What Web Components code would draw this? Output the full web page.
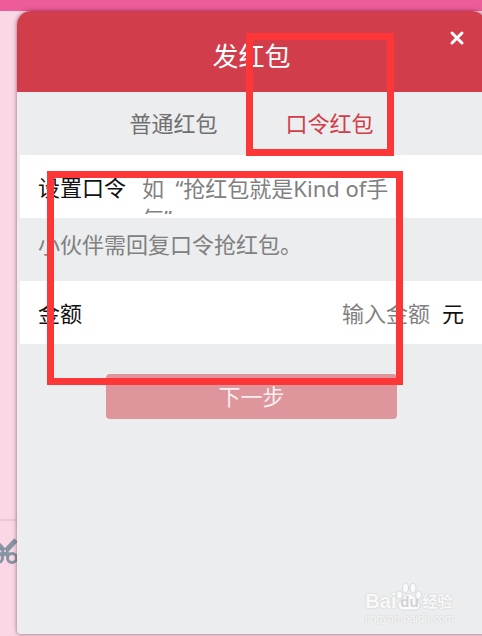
<!DOCTYPE html>
<html lang="zh-CN">
<head>
<meta charset="utf-8">
<title>发红包</title>
<style>
  body {
    margin: 0;
    overflow: hidden;
    font-family: "Noto Sans", "Noto Sans CJK SC", sans-serif;
    font-size: 22px;
    line-height: 30px;
    color: #111;
  }
</style>
</head>
<body>
<chat-window>
  <packet-dialog>
    <span slot="title">发红包</span>
    <packet-tabs slot="tabs"></packet-tabs>
    <packet-field label="设置口令" hint="如  “抢红包就是Kind of手气”" multiline></packet-field>
    <packet-note>小伙伴需回复口令抢红包。</packet-note>
    <packet-field label="金额" hint="输入金额" unit="元"></packet-field>
    <next-button>下一步</next-button>
    <site-mark slot="mark"></site-mark>
  </packet-dialog>
  <marker-frame class="tab" slot="marks"></marker-frame>
  <marker-frame class="form" slot="marks"></marker-frame>
</chat-window>

<script>
const make = (html) => {
  const template = document.createElement("template");
  template.innerHTML = html;
  return template;
};

class BaseElement extends HTMLElement {
  constructor() {
    super();
    const shadow = this.attachShadow({ mode: "open" });
    shadow.append(this.constructor.template.content.cloneNode(true));
  }
}

// the chat behind the dialog: top bar, and a strip of its toolbar
class ChatWindow extends BaseElement {
  static template = make(`
    <style>
      :host {
        display: flex;
        flex-direction: column;
        position: relative;
        height: 100vh;
        background: #fad7e5;
      }
      .bar { flex: none; height: 11px; background: #ed5b99; }
      .main { flex: 1; display: flex; min-height: 0; }
      .side {
        flex: none;
        width: 17px;
        display: flex;
        flex-direction: column;
        justify-content: flex-end;
      }
      .tools {
        height: 98px;
        padding-top: 17px;
        border-top: 2px solid #e8c6d3;
        overflow: hidden;
      }
      svg { display: block; margin-left: -9px; }
    </style>
    <div class="bar"></div>
    <div class="main">
      <div class="side">
        <div class="tools">
          <svg width="28" height="27" viewBox="0 0 28 27" fill="none" stroke="#8794a3">
            <path d="M3 2L17 17M25 2L11 17" stroke-width="5"/>
            <circle cx="7" cy="20" r="4.5" stroke-width="3"/>
            <circle cx="21" cy="20" r="4.5" stroke-width="3"/>
            <circle cx="14" cy="13" r="1" fill="#fad7e5" stroke="none"/>
          </svg>
        </div>
      </div>
      <slot></slot>
    </div>
    <slot name="marks"></slot>
  `);
}

class PacketDialog extends BaseElement {
  static template = make(`
    <style>
      :host {
        flex: 1;
        display: flex;
        flex-direction: column;
        margin: 0 -4px 2px 0;
        border-radius: 14px 14px 4px 4px;
        background: #ebedee;
        box-shadow: 0 0 4px rgba(80, 20, 50, .6);
        position: relative;
        z-index: 1;
      }
      header {
        display: grid;
        grid-template-columns: 1fr auto 1fr;
        height: 81px;
        border-radius: 14px 14px 0 0;
        background: #d13d4a;
        color: #fff;
      }
      h1 {
        grid-column: 2;
        align-self: center;
        margin: 8px 0 0;
        font-size: 26px;
        font-weight: 400;
        line-height: 36px;
      }
      button {
        justify-self: end;
        align-self: start;
        margin: 18px 20px 0 0;
        padding: 0;
        border: 0;
        background: none;
      }
      svg { display: block; }
      .body { padding-left: 3px; }
      .foot { margin-top: auto; padding: 0 32px 10px 0; display: flex; justify-content: flex-end; }
    </style>
    <header>
      <h1><slot name="title"></slot></h1>
      <button type="button" aria-label="关闭">
        <svg width="18" height="18" viewBox="0 0 18 18" stroke="#fff" stroke-width="3" stroke-linecap="round">
          <path d="M4 4L14 14M14 4L4 14"/>
        </svg>
      </button>
    </header>
    <slot name="tabs"></slot>
    <div class="body"><slot></slot></div>
    <div class="foot"><slot name="mark"></slot></div>
  `);
}

class PacketTabs extends BaseElement {
  static template = make(`
    <style>
      :host {
        display: flex;
        justify-content: center;
        align-items: center;
        gap: 68px;
        height: 63px;
      }
      button {
        padding: 0 0 2px;
        border: 0;
        background: none;
        font: inherit;
        color: #707070;
      }
      .active { color: #d13d4a; }
    </style>
    <button type="button">普通红包</button>
    <button type="button" class="active">口令红包</button>
  `);
}

// white row: label, then a text box and maybe a unit
class PacketField extends BaseElement {
  static template = make(`
    <style>
      :host { display: block; background: #fff; }
      .row {
        display: flex;
        align-items: center;
        gap: 12px;
        height: 63px;
        padding: 0 22px 0 18px;
      }
      label { flex: none; }
      input, textarea {
        display: block;
        flex: 1;
        min-width: 0;
        box-sizing: border-box;
        border: 0;
        margin: 0;
        padding: 0;
        background: none;
        outline: 0;
        resize: none;
        overflow: hidden;
        font: inherit;
        line-height: 30px;
      }
      input { text-align: right; }
      textarea {
        height: 41px;
        max-width: 258px;
        margin: 14px 0 0 4px;
      }
      ::placeholder { color: #808080; }
    </style>
    <div class="row"><label for="box"></label></div>
  `);

  constructor() {
    super();
    const row = this.shadowRoot.querySelector(".row");
    row.querySelector("label").textContent = this.getAttribute("label");

    const box = document.createElement(this.hasAttribute("multiline") ? "textarea" : "input");
    box.id = "box";
    box.placeholder = this.getAttribute("hint");
    row.append(box);

    if (this.hasAttribute("unit")) {
      const unit = document.createElement("span");
      unit.textContent = this.getAttribute("unit");
      row.append(unit);
    }
  }
}

class PacketNote extends BaseElement {
  static template = make(`
    <style>
      :host { display: block; height: 52px; padding: 11px 18px 0; color: #808080; }
    </style>
    <slot></slot>
  `);
}

class NextButton extends BaseElement {
  static template = make(`
    <style>
      :host { display: flex; justify-content: center; padding: 30px 3px 0 0; }
      button {
        width: 63%;
        height: 45px;
        padding: 0 0 2px;
        border: 0;
        border-radius: 4px;
        background: #df959c;
        color: #f8eff0;
        font: inherit;
      }
    </style>
    <button type="button"><slot></slot></button>
  `);
}

class SiteMark extends BaseElement {
  static template = make(`
    <style>
      :host {
        display: flex;
        flex-direction: column;
        color: #f8f9f9;
        text-shadow: 0 0 2px #c4c4c4;
      }
      .name { display: flex; align-items: flex-end; font: 700 20px/22px "Liberation Sans", sans-serif; }
      .paw { display: grid; justify-items: center; align-items: end; }
      .paw > * { grid-area: 1 / 1; }
      .paw span { font-size: 15px; line-height: 20px; color: #cfd1d3; text-shadow: none; }
      svg { display: block; }
      .cn { font: 700 15px/22px "Noto Sans CJK SC", sans-serif; }
      .url { font: 11px/12px "Liberation Sans", sans-serif; }
    </style>
    <div class="name">
      <span>Bai</span>
      <div class="paw">
        <svg width="26" height="30" viewBox="0 0 26 30" fill="#fafbfb" stroke="#d8dadc">
          <ellipse cx="3.500" cy="13" rx="3" ry="4"/>
          <ellipse cx="9.500" cy="6" rx="3" ry="4.500"/>
          <ellipse cx="17" cy="6" rx="3" ry="4.500"/>
          <ellipse cx="22.500" cy="13" rx="3" ry="4"/>
          <path d="M13 12C9 12 8 16 4 19C0 23 3 28 7 28H19C24 28 26 23 22 19C18 16 17 12 13 12Z"/>
        </svg>
        <span>du</span>
      </div>
      <span class="cn">经验</span>
    </div>
    <div class="url">jingyan.baidu.com</div>
  `);
}

// red outline drawn over the dialog
class MarkerFrame extends BaseElement {
  static template = make(`
    <style>
      :host {
        position: absolute;
        z-index: 2;
        box-sizing: border-box;
        border: 7px solid #fd3737;
        pointer-events: none;
      }
      :host(.tab) { left: 246px; top: 33px; width: 148px; height: 123px; }
      :host(.form) { left: 47px; top: 171px; width: 356px; height: 214px; }
    </style>
  `);
}

customElements.define("chat-window", ChatWindow);
customElements.define("packet-dialog", PacketDialog);
customElements.define("packet-tabs", PacketTabs);
customElements.define("packet-field", PacketField);
customElements.define("packet-note", PacketNote);
customElements.define("next-button", NextButton);
customElements.define("site-mark", SiteMark);
customElements.define("marker-frame", MarkerFrame);
</script>
</body>
</html>
